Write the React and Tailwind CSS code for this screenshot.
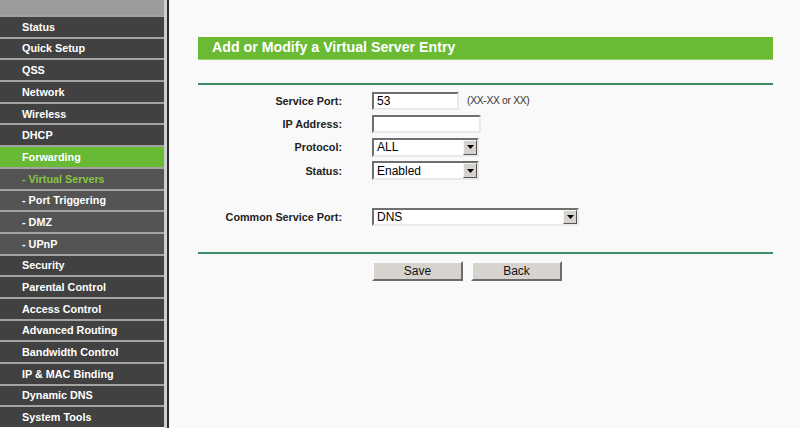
import React from 'react';

const menu = [
  { label: 'Status' },
  { label: 'Quick Setup' },
  { label: 'QSS' },
  { label: 'Network' },
  { label: 'Wireless' },
  { label: 'DHCP' },
  { label: 'Forwarding', active: true },
  { label: '- Virtual Servers', sub: true, current: true },
  { label: '- Port Triggering', sub: true },
  { label: '- DMZ', sub: true },
  { label: '- UPnP', sub: true },
  { label: 'Security' },
  { label: 'Parental Control' },
  { label: 'Access Control' },
  { label: 'Advanced Routing' },
  { label: 'Bandwidth Control' },
  { label: 'IP & MAC Binding' },
  { label: 'Dynamic DNS' },
  { label: 'System Tools' },
];

const font = { fontFamily: '"Liberation Sans", Arial, sans-serif' };

const MenuItem = ({ item }) => {
  let bg = 'bg-[#414141]';
  if (item.active) bg = 'bg-[#68b934]';
  else if (item.sub) bg = 'bg-[#545454]';
  return (
    <div
      className={`h-[21.7px] shrink-0 box-border border-t-[2px] border-[#a3a3a3] flex items-center pl-[22px] text-[10.8px] font-bold ${bg} ${
        item.current ? 'text-[#84c93f]' : 'text-white'
      }`}
    >
      {item.label}
    </div>
  );
};

const Sunken = ({ className = '', children }) => (
  <div
    className={`h-[18.5px] box-border border-[2px] border-t-[#6f6f6f] border-l-[#6f6f6f] border-b-[#e9e9e9] border-r-[#e9e9e9] bg-white flex items-center ${className}`}
  >
    {children}
  </div>
);

const Select = ({ value, width }) => (
  <Sunken className={width}>
    <span className="flex-1 pl-[3px] text-[12px] text-black leading-none">{value}</span>
    <span className="w-[14px] h-full box-border border border-t-[#f4f4f4] border-l-[#f4f4f4] border-b-[#555] border-r-[#555] bg-[#d6d3ce] flex items-center justify-center">
      <svg width="7" height="4" viewBox="0 0 7 4">
        <path d="M0 0h7L3.5 4z" fill="#000" />
      </svg>
    </span>
  </Sunken>
);

const Label = ({ children }) => (
  <div className="text-right text-[10.8px] font-bold text-[#222] h-[18.5px] flex items-center justify-end">
    {children}
  </div>
);

const Button = ({ children }) => (
  <button className="w-[91px] h-[19.5px] box-border border-[2px] border-t-[#fbfbfb] border-l-[#fbfbfb] border-b-[#6b6b6b] border-r-[#6b6b6b] bg-[#d7d4cf] text-[12px] text-[#111] leading-none">
    {children}
  </button>
);

export default function App() {
  return (
    <div className="w-[800px] h-[428px] flex overflow-hidden bg-[#f9f9f9]" style={font}>
      <div className="w-[169px] shrink-0 flex border-r-[2px] border-[#2e2e2e]">
        <div className="w-[164px] flex flex-col">
          <div className="h-[15px] shrink-0 bg-[#9c9c9c]" />
          {menu.map((m) => (
            <MenuItem key={m.label} item={m} />
          ))}
        </div>
        <div className="w-[3px] bg-[#cfcfcf]" />
      </div>

      <div className="flex-1 pl-[29px] pr-[27px] pt-[37px]">
        <div className="h-[22.5px] bg-[#6aba33] border-b border-[#9bd46f] flex items-center pl-[14px] text-white font-bold text-[14.2px]">
          Add or Modify a Virtual Server Entry
        </div>
        <div className="mt-[23px] h-[2px] bg-[#3f8a64]" />

        <div className="mt-[7px] grid grid-cols-[144px_1fr] gap-x-[30px] gap-y-[4.8px] items-center">
          <Label>Service Port:</Label>
          <div className="flex items-center gap-[8px]">
            <Sunken className="w-[87px]">
              <span className="pl-[3px] text-[12px] text-black leading-none">53</span>
            </Sunken>
            <span className="text-[10.3px] text-[#333] tracking-[-0.3px]">(XX-XX or XX)</span>
          </div>

          <Label>IP Address:</Label>
          <Sunken className="w-[109px]" />

          <Label>Protocol:</Label>
          <Select value="ALL" width="w-[107px]" />

          <Label>Status:</Label>
          <Select value="Enabled" width="w-[107px]" />
        </div>

        <div className="mt-[28px] grid grid-cols-[144px_1fr] gap-x-[30px] items-center">
          <Label>Common Service Port:</Label>
          <Select value="DNS" width="w-[207px]" />
        </div>

        <div className="mt-[26px] h-[2px] bg-[#3f8a64]" />

        <div className="mt-[7px] pl-[174px] flex gap-[8px]">
          <Button>Save</Button>
          <Button>Back</Button>
        </div>
      </div>
    </div>
  );
}
